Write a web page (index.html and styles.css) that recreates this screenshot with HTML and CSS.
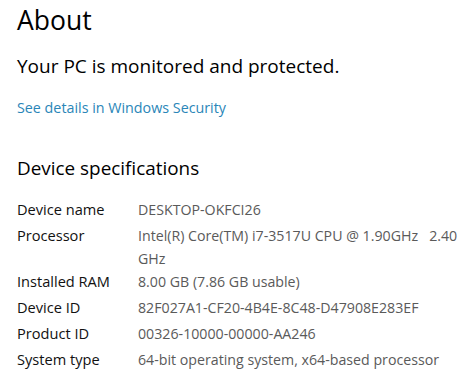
FILE: index.html
```html
<!DOCTYPE html>
<html lang="en">
<head>
<meta charset="utf-8">
<title>About</title>
<link rel="stylesheet" href="styles.css">
</head>
<body>
<main class="page">
  <h1 class="title">About</h1>
  <p class="status">Your PC is monitored and protected.</p>
  <a class="link" href="#">See details in Windows Security</a>
  <h2 class="section">Device specifications</h2>
  <dl class="specs">
    <div class="row"><dt>Device name</dt><dd>DESKTOP-OKFCI26</dd></div>
    <div class="row"><dt>Processor</dt><dd>Intel(R) Core(TM) i7-3517U CPU @ 1.90GHz&nbsp;&nbsp; 2.40 GHz</dd></div>
    <div class="row"><dt>Installed RAM</dt><dd>8.00 GB (7.86 GB usable)</dd></div>
    <div class="row"><dt>Device ID</dt><dd>82F027A1-CF20-4B4E-8C48-D47908E283EF</dd></div>
    <div class="row"><dt>Product ID</dt><dd>00326-10000-00000-AA246</dd></div>
    <div class="row"><dt>System type</dt><dd>64-bit operating system, x64-based processor</dd></div>
  </dl>
</main>
</body>
</html>
```
FILE: styles.css
```css
html, body {
  margin: 0;
  padding: 0;
  background: #ffffff;
}
body {
  font-family: "Open Sans", "Noto Sans", "Liberation Sans", sans-serif;
  color: #000000;
}
.page {
  padding: 0 10px 0 17px;
  display: flex;
  flex-direction: column;
  align-items: flex-start;
}
.title {
  margin: 0;
  font-weight: 400;
  font-size: 26.5px;
  line-height: 40px;
}
.status {
  margin: 12px 0 0;
  font-size: 19px;
  line-height: 28px;
}
.link {
  margin-top: 18px;
  font-size: 14.3px;
  line-height: 20px;
  color: #2a86b8;
  text-decoration: none;
}
.section {
  margin: 36px 0 0;
  font-weight: 400;
  font-size: 18.9px;
  line-height: 28px;
}
.specs {
  margin: 16px 0 0;
  display: flex;
  flex-direction: column;
  line-height: 23px;
}
.row {
  display: grid;
  grid-template-columns: 121px 1fr;
  min-height: 26px;
}
.row dt {
  font-size: 14.6px;
  color: #111111;
}
.row dd {
  margin: 0;
  font-size: 14.2px;
  color: #5a5a5a;
}
```
